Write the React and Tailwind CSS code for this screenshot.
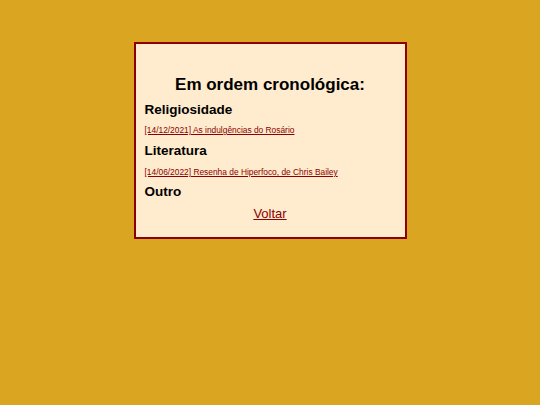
export default function App() {
  return (
    <div className="min-h-[405px] w-full bg-[#daa520] pt-[42px] font-['Liberation_Sans',Arial,sans-serif]">
      <div className="mx-auto w-[273px] h-[197px] border-2 border-[#8b0000] bg-[#ffebcd] px-[9px] text-black">
        <h1 className="mt-[30px] text-center text-[17px] leading-[21px] font-bold">Em ordem cronológica:</h1>
        <h2 className="mt-[7px] text-[13.5px] leading-[16px] font-bold">Religiosidade</h2>
        <div className="mt-[7px] text-[8.4px] leading-[10px]">
          <a href="#" className="text-[#8b0000] underline">[14/12/2021] As indulgências do Rosário</a>
        </div>
        <h2 className="mt-[8px] text-[13.5px] leading-[16px] font-bold">Literatura</h2>
        <div className="mt-[8px] text-[8.4px] leading-[10px]">
          <a href="#" className="text-[#8b0000] underline">[14/06/2022] Resenha de Hiperfoco, de Chris Bailey</a>
        </div>
        <h2 className="mt-[7px] text-[13.5px] leading-[16px] font-bold">Outro</h2>
        <div className="mt-[6px] text-center text-[13px] leading-[15px]">
          <a href="#" className="text-[#8b0000] underline">Voltar</a>
        </div>
      </div>
    </div>
  );
}
